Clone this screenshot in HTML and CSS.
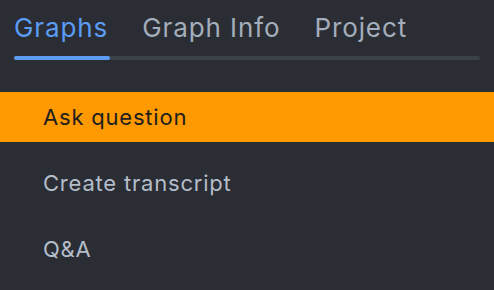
FILE: index.html
```html
<!DOCTYPE html>
<html lang="en">
<head>
    <meta charset="UTF-8">
    <title>Graphs</title>
    <link rel="stylesheet" href="styles.css">
</head>
<body>
    <div class="panel">
        <nav class="tabs">
            <span class="tab active">Graphs</span>
            <span class="tab">Graph Info</span>
            <span class="tab">Project</span>
        </nav>
        <div class="track">
            <div class="track-fill"></div>
        </div>

        <ul class="menu">
            <li class="item selected">Ask question</li>
            <li class="item">Create transcript</li>
            <li class="item">Q&amp;A</li>
        </ul>
    </div>
</body>
</html>
```

FILE: styles.css
```css
* {
    margin: 0;
    padding: 0;
    box-sizing: border-box;
}

body {
    background: #2a2d33;
    font-family: Inter, "Noto Sans", sans-serif;
    width: 494px;
    height: 290px;
    overflow: hidden;
}

.tabs {
    display: flex;
    gap: 34px;
    padding: 13px 14px 0;
    font-size: 26px;
    line-height: 30px;
    letter-spacing: 0.9px;
}

.tab {
    color: #a3adbb;
}

.tab.active {
    color: #5b9cf5;
}

.track {
    margin: 13px 14px 0;
    height: 4px;
    background: #3b4149;
    border-radius: 2px;
}

.track-fill {
    width: 96px;
    height: 4px;
    background: #5b9cf5;
    border-radius: 2px;
}

.menu {
    list-style: none;
    margin-top: 32px;
    display: flex;
    flex-direction: column;
    gap: 16px;
}

.item {
    height: 50px;
    display: flex;
    align-items: center;
    padding-left: 43px;
    font-size: 22px;
    letter-spacing: 0.8px;
    color: #b4bdca;
}

.item.selected {
    background: #ff9900;
    color: #1e1e1e;
}
```
